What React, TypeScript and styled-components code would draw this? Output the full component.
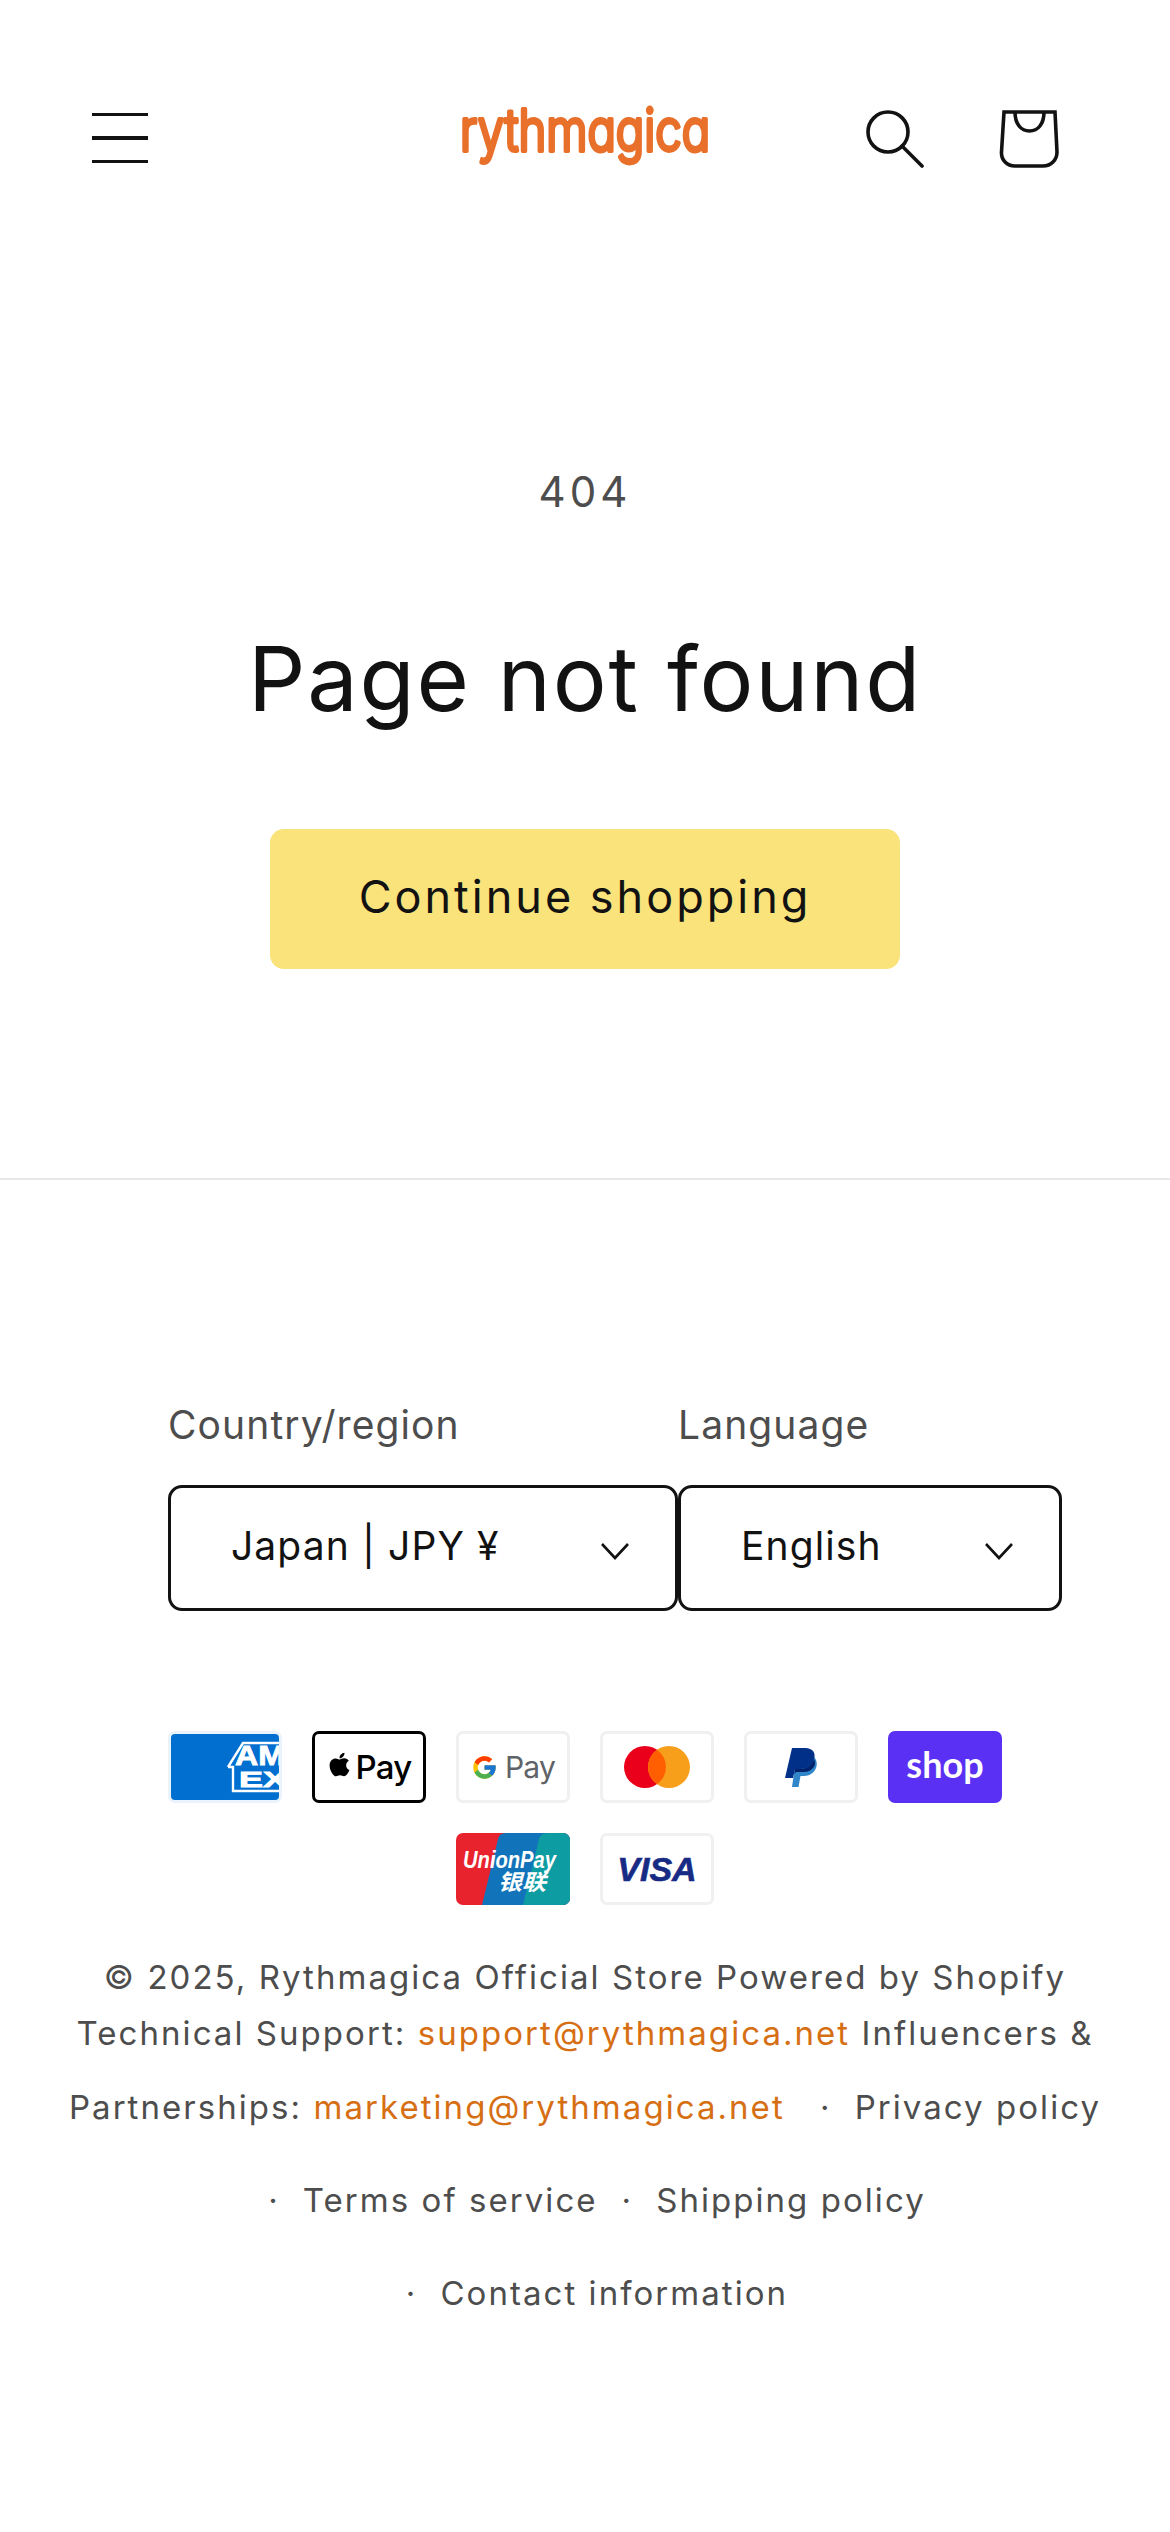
import React from 'react'
import styled, { createGlobalStyle } from 'styled-components'
import { FaApple } from 'react-icons/fa'
import { FcGoogle } from 'react-icons/fc'

const GlobalStyle = createGlobalStyle`
  html, body {
    margin: 0;
    padding: 0;
    background: #fff;
  }
  body {
    font-family: Inter, "Liberation Sans", sans-serif;
    color: #121212;
  }
  * {
    box-sizing: border-box;
  }
`

const Page = styled.div`
  width: 1170px;
  min-height: 2532px;
`

const HeaderFrame = styled.header`
  display: grid;
  grid-template-columns: 1fr auto 1fr;
  align-items: center;
  height: 276px;
  padding: 0 92px;
`

const MenuButton = styled.div`
  display: flex;
  flex-direction: column;
  gap: 20px;
  width: 56px;
  span {
    display: block;
    height: 3.5px;
    background: #121212;
  }
`

const LogoMark = styled.svg`
  display: block;
  width: 258px;
  height: 70px;
  margin-bottom: 2px;
`

const HeaderIcons = styled.div`
  display: flex;
  justify-content: flex-end;
  align-items: center;
  gap: 75px;
  padding-right: 19px;
`

const Main = styled.main`
  display: flex;
  flex-direction: column;
  align-items: center;
  height: 904px;
  padding-top: 188px;
  border-bottom: 2px solid #e7e7e7;
`

const ErrorCode = styled.p`
  margin: 0;
  font-size: 42px;
  line-height: 56px;
  letter-spacing: 4px;
  color: #4d4d4d;
`

const Title = styled.h1`
  margin: 105px 0 0;
  font-size: 90px;
  font-weight: 400;
  line-height: 108px;
  letter-spacing: 1.8px;
  color: #121212;
`

const ContinueButton = styled.a`
  display: flex;
  align-items: center;
  justify-content: center;
  width: 630px;
  height: 140px;
  margin-top: 96px;
  padding-bottom: 5px;
  border-radius: 14px;
  background: #fae37b;
  font-size: 45px;
  letter-spacing: 3px;
  color: #121212;
`

const Footer = styled.footer`
  display: flex;
  flex-direction: column;
  align-items: center;
  padding-top: 216px;
`

const Localization = styled.div`
  display: flex;
  align-self: flex-start;
  padding-left: 168px;
`

const Field = styled.div<{ $width: number }>`
  display: flex;
  flex-direction: column;
  width: ${({ $width }) => $width}px;
`

const FieldLabel = styled.label`
  font-size: 39px;
  line-height: 58px;
  letter-spacing: 1.1px;
  color: #4d4d4d;
  margin-bottom: 31px;
`

const SelectBox = styled.div`
  display: flex;
  align-items: center;
  justify-content: space-between;
  height: 126px;
  padding: 0 45px 6px 60px;
  border: 3.5px solid #121212;
  border-radius: 14px;
  font-size: 39px;
  letter-spacing: 1.1px;
  color: #121212;
  svg {
    margin-top: 11px;
  }
`

const PaymentList = styled.div`
  display: flex;
  flex-wrap: wrap;
  justify-content: center;
  gap: 30px;
  width: 870px;
  margin-top: 120px;
`

const PaymentCard = styled.div<{ $border?: string; $bg?: string; $flush?: boolean }>`
  display: flex;
  align-items: center;
  justify-content: center;
  width: 114px;
  height: 72px;
  overflow: hidden;
  border-radius: 7px;
  border: ${({ $flush, $border }) => ($flush ? 'none' : `3px solid ${$border || '#f0f0f0'}`)};
  background: ${({ $bg }) => $bg || '#fff'};
`

const PayWord = styled.span<{ $color: string; $size: number; $weight: number }>`
  font-family: Inter, sans-serif;
  font-size: ${({ $size }) => $size}px;
  font-weight: ${({ $weight }) => $weight};
  letter-spacing: -0.8px;
  color: ${({ $color }) => $color};
  line-height: 1;
`

const ApplePayRow = styled.div`
  display: flex;
  align-items: center;
  gap: 3px;
  padding-right: 1px;
  svg {
    margin-top: -5px;
  }
`

const GooglePayRow = styled.div`
  display: flex;
  align-items: center;
  gap: 7px;
`

const ShopWord = styled.span`
  font-family: Lato, sans-serif;
  font-size: 36px;
  font-weight: 700;
  letter-spacing: 0;
  line-height: 1;
  color: #fff;
  padding-bottom: 6px;
`

const VisaWord = styled.span`
  font-family: "Liberation Sans", sans-serif;
  font-size: 34px;
  font-weight: 700;
  font-style: italic;
  letter-spacing: 0;
  line-height: 1;
  color: #172b85;
  -webkit-text-stroke: 0.6px #172b85;
`

const Legal = styled.div`
  width: 1046px;
  margin-top: 44px;
  font-size: 33px;
  line-height: 56px;
  letter-spacing: 2.05px;
  text-align: center;
  color: #4d4d4d;
`

const Accent = styled.a`
  color: #d66f14;
`

const PolicyItem = styled.span`
  display: inline-block;
  line-height: 93px;
  padding-left: 24px;
  &::before {
    content: '·';
    margin-right: 23px;
  }
`

const MenuIcon = () => (
  <MenuButton>
    <span />
    <span />
    <span />
  </MenuButton>
)

// the real logo is a rounded face, so squeeze Inter and round it off with a stroke
const Logo = () => (
  <LogoMark viewBox="0 0 327 70" preserveAspectRatio="none">
    <text
      x="5"
      y="49"
      textLength="317"
      lengthAdjust="spacingAndGlyphs"
      fontFamily="Inter"
      fontSize="58"
      fontWeight="300"
      fill="#e8702a"
      stroke="#e8702a"
      strokeWidth="4"
      strokeLinejoin="round"
      strokeLinecap="round"
      style={{ fontFeatureSettings: '"cv11"' }}
    >
      rythmagica
    </text>
  </LogoMark>
)

const SearchIcon = () => (
  <svg width="60" height="60" viewBox="0 0 60 60" fill="none" stroke="#121212" strokeWidth="3.6" strokeLinecap="round">
    <circle cx="24" cy="24" r="20" />
    <path d="M38 38 L58 58" />
  </svg>
)

const CartIcon = () => (
  <svg width="60" height="60" viewBox="0 0 60 60" fill="none" stroke="#121212" strokeWidth="3.6">
    <path d="M5 4 H56 L58 44 C58 52 52 58 44 58 H16 C8 58 2 52 2.500 44 Z" />
    <path d="M16 4 C16 16 22 23 30.500 23 C39 23 45 16 45 4" />
  </svg>
)

const Chevron = () => (
  <svg width="30" height="18" viewBox="0 0 30 18" fill="none" stroke="#121212" strokeWidth="2.6">
    <path d="M2 2 L15 16 L28 2" />
  </svg>
)

const AmexCard = () => (
  <PaymentCard $border="#eaf3fb" $bg="#006fcf">
    <svg width="108" height="66" viewBox="0 0 108 66">
      <path d="M57 33 L72 9 H110 M57 33 H62 V57 H110" fill="none" stroke="#fff" strokeWidth="2.4" />
      <text x="64" y="31" textLength="50" lengthAdjust="spacingAndGlyphs" fontFamily="Liberation Sans" fontWeight="700" fontSize="27" fill="#fff" stroke="#fff" strokeWidth="0.8">AM</text>
      <text x="68" y="53" textLength="48" lengthAdjust="spacingAndGlyphs" fontFamily="Liberation Sans" fontWeight="700" fontSize="22" fill="#fff" stroke="#fff" strokeWidth="0.8">EX</text>
    </svg>
  </PaymentCard>
)

const UnionPayCard = () => (
  <PaymentCard $flush>
    <svg width="114" height="72" viewBox="0 0 114 72">
      <rect width="114" height="72" fill="#e8232e" />
      <path d="M50 0 H114 V72 H26 L42 6 Q43 0 50 0 Z" fill="#1173b9" />
      <path d="M92 0 H114 V72 H67 L83 6 Q84 0 92 0 Z" fill="#0e9ca3" />
      <text x="7" y="35" textLength="93" lengthAdjust="spacingAndGlyphs" fontFamily="Liberation Sans" fontWeight="700" fontStyle="italic" fontSize="23" fill="#fff">UnionPay</text>
      <text x="42" y="57" textLength="48" lengthAdjust="spacingAndGlyphs" fontFamily="'Noto Sans CJK SC', sans-serif" fontWeight="700" fontStyle="italic" fontSize="22" fill="#fff">银联</text>
    </svg>
  </PaymentCard>
)

const PayPalMark = () => (
  <svg width="33" height="39" viewBox="0 0 33 39">
    <path d="M29 9 C33 13 32 19 30 22 C27 27 22 28 18 28 H15.500 L13.500 39 H7 L10 18 Z" fill="#3086c8" />
    <path d="M7 0 H20 C28 0 31 5 29 11 C27 18 21 21 15 21 H10 L8 30 H0 Z" fill="#003087" />
    <path d="M10 21 H15 C21 21 27 18 29 11 C31 14 30 19 27 21 C24 24 20 24 17 24 H11 L9.500 26 Z" fill="#012169" />
  </svg>
)

const MastercardMark = () => (
  <svg width="66" height="42" viewBox="0 0 66 42">
    <circle cx="21" cy="21" r="21" fill="#eb001b" />
    <circle cx="45" cy="21" r="21" fill="#f79e1b" />
    <path d="M33 3.800 A21 21 0 0 1 33 38.200 A21 21 0 0 1 33 3.800 Z" fill="#ff5f00" />
  </svg>
)

export default function App() {
  return (
    <Page>
      <GlobalStyle />
      <HeaderFrame>
        <MenuIcon />
        <Logo />
        <HeaderIcons>
          <SearchIcon />
          <CartIcon />
        </HeaderIcons>
      </HeaderFrame>
      <Main>
        <ErrorCode>404</ErrorCode>
        <Title>Page not found</Title>
        <ContinueButton>Continue shopping</ContinueButton>
      </Main>
      <Footer>
        <Localization>
          <Field $width={510}>
            <FieldLabel>Country/region</FieldLabel>
            <SelectBox>
              Japan | JPY ¥
              <Chevron />
            </SelectBox>
          </Field>
          <Field $width={384}>
            <FieldLabel>Language</FieldLabel>
            <SelectBox>
              English
              <Chevron />
            </SelectBox>
          </Field>
        </Localization>
        <PaymentList>
          <AmexCard />
          <PaymentCard $border="#000">
            <ApplePayRow>
              <FaApple size={27} color="#000" />
              <PayWord $color="#000" $size={33} $weight={500}>Pay</PayWord>
            </ApplePayRow>
          </PaymentCard>
          <PaymentCard>
            <GooglePayRow>
              <FcGoogle size={27} />
              <PayWord $color="#5f6368" $size={30} $weight={400}>Pay</PayWord>
            </GooglePayRow>
          </PaymentCard>
          <PaymentCard>
            <MastercardMark />
          </PaymentCard>
          <PaymentCard>
            <PayPalMark />
          </PaymentCard>
          <PaymentCard $border="#5a31f4" $bg="#5a31f4">
            <ShopWord>shop</ShopWord>
          </PaymentCard>
          <UnionPayCard />
          <PaymentCard>
            <VisaWord>VISA</VisaWord>
          </PaymentCard>
        </PaymentList>
        <Legal>
          © 2025, Rythmagica Official Store Powered by Shopify Technical Support:{' '}
          <Accent>support@rythmagica.net</Accent> Influencers &amp; Partnerships:{' '}
          <Accent>marketing@rythmagica.net</Accent>{' '}
          <PolicyItem>Privacy policy</PolicyItem>
          <PolicyItem>Terms of service</PolicyItem>
          <PolicyItem>Shipping policy</PolicyItem>
          <PolicyItem>Contact information</PolicyItem>
        </Legal>
      </Footer>
    </Page>
  )
}
